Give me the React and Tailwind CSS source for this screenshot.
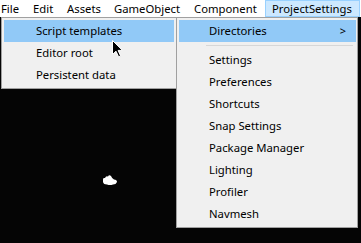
import React from 'react';

const menuBar = [
  { label: 'File', w: 'w-[26px]', pl: 'pl-[1px]' },
  { label: 'Edit', w: 'w-[34px]', pl: 'pl-[7px]' },
  { label: 'Assets', w: 'w-[47px]', pl: 'pl-[7px]' },
  { label: 'GameObject', w: 'w-[80px]', pl: 'pl-[7px]' },
  { label: 'Component', w: 'w-[78px]', pl: 'pl-[7px]' },
];

const leftItems = ['Script templates', 'Editor root', 'Persistent data'];
const rightItems = ['Settings', 'Preferences', 'Shortcuts', 'Snap Settings', 'Package Manager', 'Lighting', 'Profiler', 'Navmesh'];

const Cursor = () => (
  <svg width="11" height="18" viewBox="0 0 11 18" className="absolute left-[112px] top-[40px]">
    <path d="M0.5 0.5 L0.5 14.5 L4 11.2 L6.6 16.8 L8.6 15.9 L6.1 10.4 L10.5 10.4 Z" fill="#000" stroke="#fff" strokeWidth="1" strokeLinejoin="round" />
  </svg>
);

const Blob = () => (
  <svg width="16" height="12" viewBox="0 0 16 12" className="absolute left-[102px] top-[174px]">
    <path d="M1 6 Q0.5 3.5 3 4 Q4 1.5 6 2.5 Q7 0.5 9 2 Q10 4.5 12 5.5 Q15 5.5 15 8 Q14 10.5 11 10.5 Q8 11.5 5 10.5 Q1.5 10.5 1 8 Z" fill="#fff" />
  </svg>
);

export default function App() {
  return (
    <div className="relative w-[361px] h-[243px] overflow-hidden bg-[#050505] text-[11.3px] text-black" style={{ fontFamily: '"Segoe UI", "Noto Sans", sans-serif' }}>
      {/* barra de menu */}
      <div className="flex h-[17px] bg-white leading-[17px]">
        {menuBar.map((m) => (
          <div key={m.label} className={`${m.w} ${m.pl} shrink-0`}>{m.label}</div>
        ))}
        <div className="w-[95px] shrink-0 pl-[6px] bg-[#cce8ff] border border-[#99d1ff] leading-[15px]">ProjectSettings</div>
      </div>

      <div className="flex items-start pl-[1px]">
        {/* menu da esquerda */}
        <div className="w-[176px] h-[72px] shrink-0 bg-[#f0f0f0] border border-[#a0a0a0] p-[2px]">
          {leftItems.map((item, i) => (
            <div key={item} className={`h-[22px] leading-[22px] pl-[32px] ${i === 0 ? 'bg-[#91c9f7]' : ''}`}>{item}</div>
          ))}
        </div>

        {/* submenu ProjectSettings */}
        <div className="w-[182px] h-[211px] shrink-0 -ml-[1px] bg-[#f0f0f0] border border-[#a0a0a0] p-[1px]">
          <div className="flex items-center justify-between h-[22px] ml-[1px] mt-[1px] pl-[30px] pr-[10px] bg-[#91c9f7]">
            <span>Directories</span>
            <span className="text-[11px]">&gt;</span>
          </div>
          <div className="h-[7px] flex items-center pl-[28px] pr-[3px]">
            <div className="h-px w-full bg-[#d7d7d7]" />
          </div>
          {rightItems.map((item) => (
            <div key={item} className="h-[22px] leading-[22px] pl-[31px]">{item}</div>
          ))}
        </div>
      </div>

      <Blob />
      <Cursor />
    </div>
  );
}
